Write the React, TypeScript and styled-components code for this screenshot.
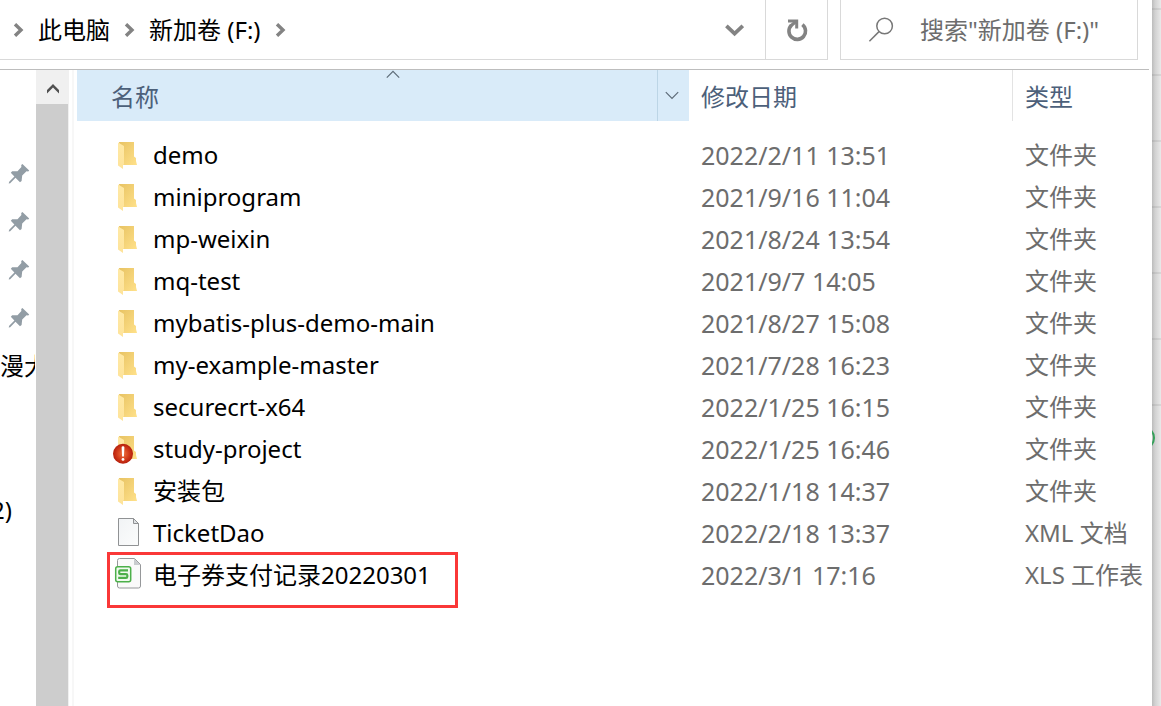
import React from "react";
import styled, { createGlobalStyle } from "styled-components";

const GlobalStyle = createGlobalStyle`
  *, *::before, *::after { box-sizing: border-box; }
  body {
    margin: 0;
    background: #ffffff;
    color: #000000;
    font: 24px/32px "Noto Sans", "Noto Sans CJK SC", sans-serif;
  }
  button, input { font: inherit; color: inherit; background: none; border: 0; padding: 0; margin: 0; }
  button { cursor: pointer; }
  svg { display: block; flex: none; }
`;

const Desktop = styled.div`
  display: flex;
  height: 100vh;
  overflow: hidden;
`;

const Window = styled.main`
  display: flex;
  flex: 1;
  flex-direction: column;
  min-width: 0;
  background: #ffffff;
`;

const Toolbar = styled.header`
  display: flex;
  flex: none;
  gap: 12px;
  height: 60px;
  padding-right: 14px;
`;

const AddressBar = styled.nav`
  display: flex;
  flex: 1;
  align-items: center;
  padding-left: 13px;
  border: solid #d9d9d9;
  border-width: 0 1px 1px 0;
`;

const Crumb = styled.button`
  padding: 0 14px;
  white-space: nowrap;
`;

const BarButton = styled.button<{ $divided?: boolean }>`
  display: flex;
  align-items: center;
  justify-content: center;
  align-self: stretch;
  width: 62px;
  border-left: ${(p) => (p.$divided ? "1px solid #d9d9d9" : "0")};
`;

const Spacer = styled.span`
  flex: 1;
`;

const SearchBox = styled.label`
  display: flex;
  align-items: center;
  gap: 26px;
  width: 298px;
  padding-left: 27px;
  border: solid #d9d9d9;
  border-width: 0 1px 1px;
`;

const SearchInput = styled.input`
  flex: 1;
  min-width: 0;
  outline: 0;
  &::placeholder { color: #6d6d6d; opacity: 1; }
`;

const Body = styled.div`
  display: flex;
  flex: 1;
  min-height: 0;
  margin-top: 9px;
  margin-right: 3px;
  border-top: 1px solid #bdbdbd;
`;

const Sidebar = styled.aside`
  width: 36px;
  padding: 80px 1px 0 0;
  overflow: hidden;
`;

const SideItem = styled.div<{ $cut?: boolean }>`
  display: flex;
  align-items: center;
  height: 48px;
  margin-left: ${(p) => (p.$cut ? "-9px" : "0")};
  white-space: nowrap;
  overflow: hidden;
`;

const ScrollTrack = styled.div`
  display: flex;
  flex-direction: column;
  width: 33px;
  background: #f0f0f0;
`;

const ScrollUp = styled.button`
  display: flex;
  align-items: center;
  justify-content: center;
  height: 34px;
  padding-top: 4px;
`;

const ScrollThumb = styled.div`
  flex: 1;
  margin-right: 1px;
  background: #cdcdcd;
`;

const Splitter = styled.div`
  width: 8px;
  border: solid transparent;
  border-width: 0 3px;
  background: #f7f7f7 padding-box;
`;

const FilePane = styled.section`
  flex: 1;
  min-width: 0;
  margin-right: -3px;
`;

const FileTable = styled.table`
  width: 100%;
  table-layout: fixed;
  border-collapse: separate;
  border-spacing: 0;
`;

const HeadCell = styled.th<{ $width?: number; $sorted?: boolean; $divided?: boolean }>`
  position: relative;
  width: ${(p) => (p.$width ? `${p.$width}px` : "auto")};
  height: 51px;
  padding: 0;
  background: ${(p) => (p.$sorted ? "#d9ebf9" : "transparent")};
  border-left: ${(p) => (p.$divided ? "1px solid #e3e3e3" : "0")};
  color: #4c607a;
  font-weight: 400;
  text-align: left;
`;

const HeadRow = styled.div`
  display: flex;
  height: 51px;
`;

const SortButton = styled.button<{ $indent?: boolean }>`
  flex: 1;
  padding: 2px 0 0 ${(p) => (p.$indent ? 34 : 12)}px;
  text-align: left;
`;

const FilterButton = styled.button`
  display: flex;
  align-items: center;
  justify-content: center;
  width: 32px;
  padding-right: 4px;
  border-left: 1px solid #bcd5e6;
`;

const SortMark = styled.span`
  position: absolute;
  top: 0;
  left: 20px;
  right: 0;
  display: flex;
  justify-content: center;
  pointer-events: none;
`;

const FileList = styled.tbody`
  &::before { content: ""; display: table-row; height: 13px; }
`;

const Cell = styled.td`
  height: 42px;
  padding: 0 0 0 13px;
  color: #6d6d6d;
  white-space: nowrap;
`;

const DateCell = styled(Cell)`
  padding-left: 12px;
  font-size: 25px;
`;

const NameCell = styled(Cell)`
  position: relative;
  padding-left: 34px;
  color: #000000;
`;

const FileName = styled.div`
  display: flex;
  align-items: center;
  gap: 8px;
`;

const Highlight = styled.span`
  position: absolute;
  top: -2px;
  left: 30px;
  width: 351px;
  height: 56px;
  border: 3px solid #fa3838;
  pointer-events: none;
`;

const Backdrop = styled.div`
  position: relative;
  flex: none;
  width: 9px;
  height: 100%;
  overflow: hidden;
  background: linear-gradient(90deg, #bcbcbc, #d2d2d2 35%, #e9e9e9);
`;

const BackdropRow = styled.div<{ $first?: boolean }>`
  height: ${(p) => (p.$first ? 10 : 66)}px;
  border-bottom: 2px solid rgba(0, 0, 0, 0.07);
`;

const BackdropDot = styled.span`
  position: absolute;
  top: 426px;
  left: -21px;
  width: 24px;
  height: 24px;
  border: 2px solid #35a05a;
  border-radius: 50%;
`;

const CrumbArrow = () => (
  <svg width="11" height="14" viewBox="0 0 11 14" fill="none" stroke="#838383" strokeWidth="3.4" aria-hidden="true">
    <path d="M2 1.2 8 7l-6 5.8" />
  </svg>
);

const ChevronBold = () => (
  <svg width="20" height="14" viewBox="0 0 20 14" fill="none" stroke="#838383" strokeWidth="3.8" aria-hidden="true">
    <path d="m2.4 2.8 8.2 7.8 8.2-7.8" />
  </svg>
);

const RefreshIcon = () => (
  <svg width="22" height="24" viewBox="0 0 22 24" fill="none" stroke="#838383" aria-hidden="true">
    <path d="M16.4 6.6A8.3 8.3 0 1 1 5.4 7.2" strokeWidth="3.6" />
    <path d="M2 3h8.7v7.6" strokeWidth="3" />
    <path d="M4.6 8 10 3.6" strokeWidth="3.2" />
  </svg>
);

const SearchIcon = () => (
  <svg width="26" height="26" viewBox="0 0 26 26" fill="none" stroke="#777777" strokeWidth="1.5" aria-hidden="true">
    <circle cx="16.6" cy="9" r="7.8" />
    <path d="M11 14.6 1.4 24.2" />
  </svg>
);

const ThinChevron = ({ up = false }: { up?: boolean }) => (
  <svg width="14" height="9" viewBox="0 0 14 9" fill="none" stroke="#5d6b78" strokeWidth="1.2" aria-hidden="true">
    <path d={up ? "M.8 7.6 7 1.4l6.2 6.2" : "M.8 1.2 7 7.4l6.2-6.2"} />
  </svg>
);

const ScrollArrow = () => (
  <svg width="12" height="10" viewBox="0 0 12 10" fill="#505050" aria-hidden="true">
    <path d="m6 0 6 6v3.4L6 3.4 0 9.4V6z" />
  </svg>
);

const PinIcon = () => (
  <svg width="36" height="22" viewBox="0 0 36 22" fill="#929da5" aria-hidden="true">
    <path d="m22.4 1 6.8 6.4-1 1-1.7-.2-4.3 4.2-.6 5.7-1.6 1.1-4.5-4.4-5.3 5.4-1.5.3.5-1.8 5.2-5.1-3.6-3.9 1.4-1.4 5.3-.1 3.9-4.2-.2-2z" />
  </svg>
);

type Kind = "folder" | "error" | "file" | "sheet";

const FileIcon = ({ kind }: { kind: Kind }) => (
  <svg width="34" height="34" viewBox="0 0 34 34" fill="none" aria-hidden="true">
    <defs>
      <linearGradient id="folderBack" x1="0" y1="0" x2="1" y2="1">
        <stop offset="0" stopColor="#e8c363" />
        <stop offset="1" stopColor="#ffe18a" />
      </linearGradient>
      <linearGradient id="folderFront" x1="0" y1="0" x2="0" y2="1">
        <stop offset="0" stopColor="#ffe9a5" />
        <stop offset="1" stopColor="#fee39a" />
      </linearGradient>
      <radialGradient id="errorFill">
        <stop offset="0" stopColor="#ef7440" />
        <stop offset="0.65" stopColor="#cf3718" />
        <stop offset="1" stopColor="#b51f0c" />
      </radialGradient>
      <linearGradient id="paper" x1="0" y1="0" x2="1" y2="1">
        <stop offset="0" stopColor="#f1f3f5" />
        <stop offset="1" stopColor="#fbfcfc" />
      </linearGradient>
    </defs>
    {(kind === "folder" || kind === "error") && (
      <>
        <path d="M8 4h15v14.5l2 1.5v3l1 4H11z" fill="url(#folderBack)" />
        <path d="M7 4.5 13 8v18.4l-1 .3V31l-5-3.5z" fill="url(#folderFront)" />
      </>
    )}
    {kind === "error" && (
      <>
        <circle cx="12" cy="21.8" r="10" fill="url(#errorFill)" />
        <path d="M12 14.2a1.4 1.4 0 0 1 1.4 1.4l-.5 8.8h-1.8l-.5-8.8a1.4 1.4 0 0 1 1.4-1.4z" fill="#ffffff" />
        <circle cx="12" cy="27.4" r="1.4" fill="#ffffff" />
      </>
    )}
    {kind === "file" && (
      <>
        <path d="M7.5 2.5h15l5 5v22h-20z" fill="url(#paper)" stroke="#909294" />
        <path d="M22.5 2.5v5h5z" fill="#dfe2e4" stroke="#909294" />
      </>
    )}
    {kind === "sheet" && (
      <>
        <path d="M8.5.5h15l6 6V28a2 2 0 0 1-2 2h-19a2 2 0 0 1-2-2V2.5a2 2 0 0 1 2-2z" fill="#fafafa" stroke="#96989a" />
        <path d="m23 .5 6.5 6.5H23z" fill="#c9cccf" />
        <rect x="4.7" y="8.7" width="15" height="15" rx="2" fill="#f1faef" stroke="#4cb04a" strokeWidth="1.5" />
        <path d="M17 12.4H9.4q-1.2 0-1.2 1v1.6q0 1.1 1.2 1.1H15q1.3 0 1.3 1.1v1.6q0 1.1-1.3 1.1H7.2" stroke="#4cb04a" strokeWidth="2.2" />
      </>
    )}
  </svg>
);

interface Entry {
  name: string;
  date: string;
  type: string;
  kind: Kind;
  marked?: boolean;
}

const entries: Entry[] = [
  { name: "demo", date: "2022/2/11 13:51", type: "文件夹", kind: "folder" },
  { name: "miniprogram", date: "2021/9/16 11:04", type: "文件夹", kind: "folder" },
  { name: "mp-weixin", date: "2021/8/24 13:54", type: "文件夹", kind: "folder" },
  { name: "mq-test", date: "2021/9/7 14:05", type: "文件夹", kind: "folder" },
  { name: "mybatis-plus-demo-main", date: "2021/8/27 15:08", type: "文件夹", kind: "folder" },
  { name: "my-example-master", date: "2021/7/28 16:23", type: "文件夹", kind: "folder" },
  { name: "securecrt-x64", date: "2022/1/25 16:15", type: "文件夹", kind: "folder" },
  { name: "study-project", date: "2022/1/25 16:46", type: "文件夹", kind: "error" },
  { name: "安装包", date: "2022/1/18 14:37", type: "文件夹", kind: "folder" },
  { name: "TicketDao", date: "2022/2/18 13:37", type: "XML 文档", kind: "file" },
  { name: "电子券支付记录20220301", date: "2022/3/1 17:16", type: "XLS 工作表", kind: "sheet", marked: true },
];

export default function App() {
  return (
    <>
      <GlobalStyle />
      <Desktop>
        <Window>
          <Toolbar>
            <AddressBar>
              <CrumbArrow />
              <Crumb>此电脑</Crumb>
              <CrumbArrow />
              <Crumb>新加卷 (F:)</Crumb>
              <CrumbArrow />
              <Spacer />
              <BarButton aria-label="展开"><ChevronBold /></BarButton>
              <BarButton $divided aria-label="刷新"><RefreshIcon /></BarButton>
            </AddressBar>
            <SearchBox>
              <SearchIcon />
              <SearchInput type="text" aria-label="搜索" placeholder={'搜索"新加卷 (F:)"'} />
            </SearchBox>
          </Toolbar>
          <Body>
            <Sidebar>
              {[0, 1, 2, 3].map((i) => (
                <SideItem key={i}><PinIcon /></SideItem>
              ))}
              <SideItem>漫大</SideItem>
              <SideItem />
              <SideItem />
              <SideItem $cut>2)</SideItem>
            </Sidebar>
            <ScrollTrack>
              <ScrollUp aria-label="向上滚动"><ScrollArrow /></ScrollUp>
              <ScrollThumb />
            </ScrollTrack>
            <Splitter />
            <FilePane>
              <FileTable>
                <thead>
                  <tr>
                    <HeadCell $sorted aria-sort="ascending">
                      <HeadRow>
                        <SortButton $indent>名称</SortButton>
                        <FilterButton aria-label="筛选"><ThinChevron /></FilterButton>
                      </HeadRow>
                      <SortMark><ThinChevron up /></SortMark>
                    </HeadCell>
                    <HeadCell $width={323}>
                      <HeadRow><SortButton>修改日期</SortButton></HeadRow>
                    </HeadCell>
                    <HeadCell $width={140} $divided>
                      <HeadRow><SortButton>类型</SortButton></HeadRow>
                    </HeadCell>
                  </tr>
                </thead>
                <FileList>
                  {entries.map((entry) => (
                    <tr key={entry.name}>
                      <NameCell>
                        <FileName>
                          <FileIcon kind={entry.kind} />
                          {entry.name}
                        </FileName>
                        {entry.marked && <Highlight />}
                      </NameCell>
                      <DateCell>{entry.date}</DateCell>
                      <Cell>{entry.type}</Cell>
                    </tr>
                  ))}
                </FileList>
              </FileTable>
            </FilePane>
          </Body>
        </Window>
        <Backdrop>
          <BackdropRow $first />
          {[0, 1, 2, 3, 4, 5].map((i) => (
            <BackdropRow key={i} />
          ))}
          <BackdropDot />
        </Backdrop>
      </Desktop>
    </>
  );
}
